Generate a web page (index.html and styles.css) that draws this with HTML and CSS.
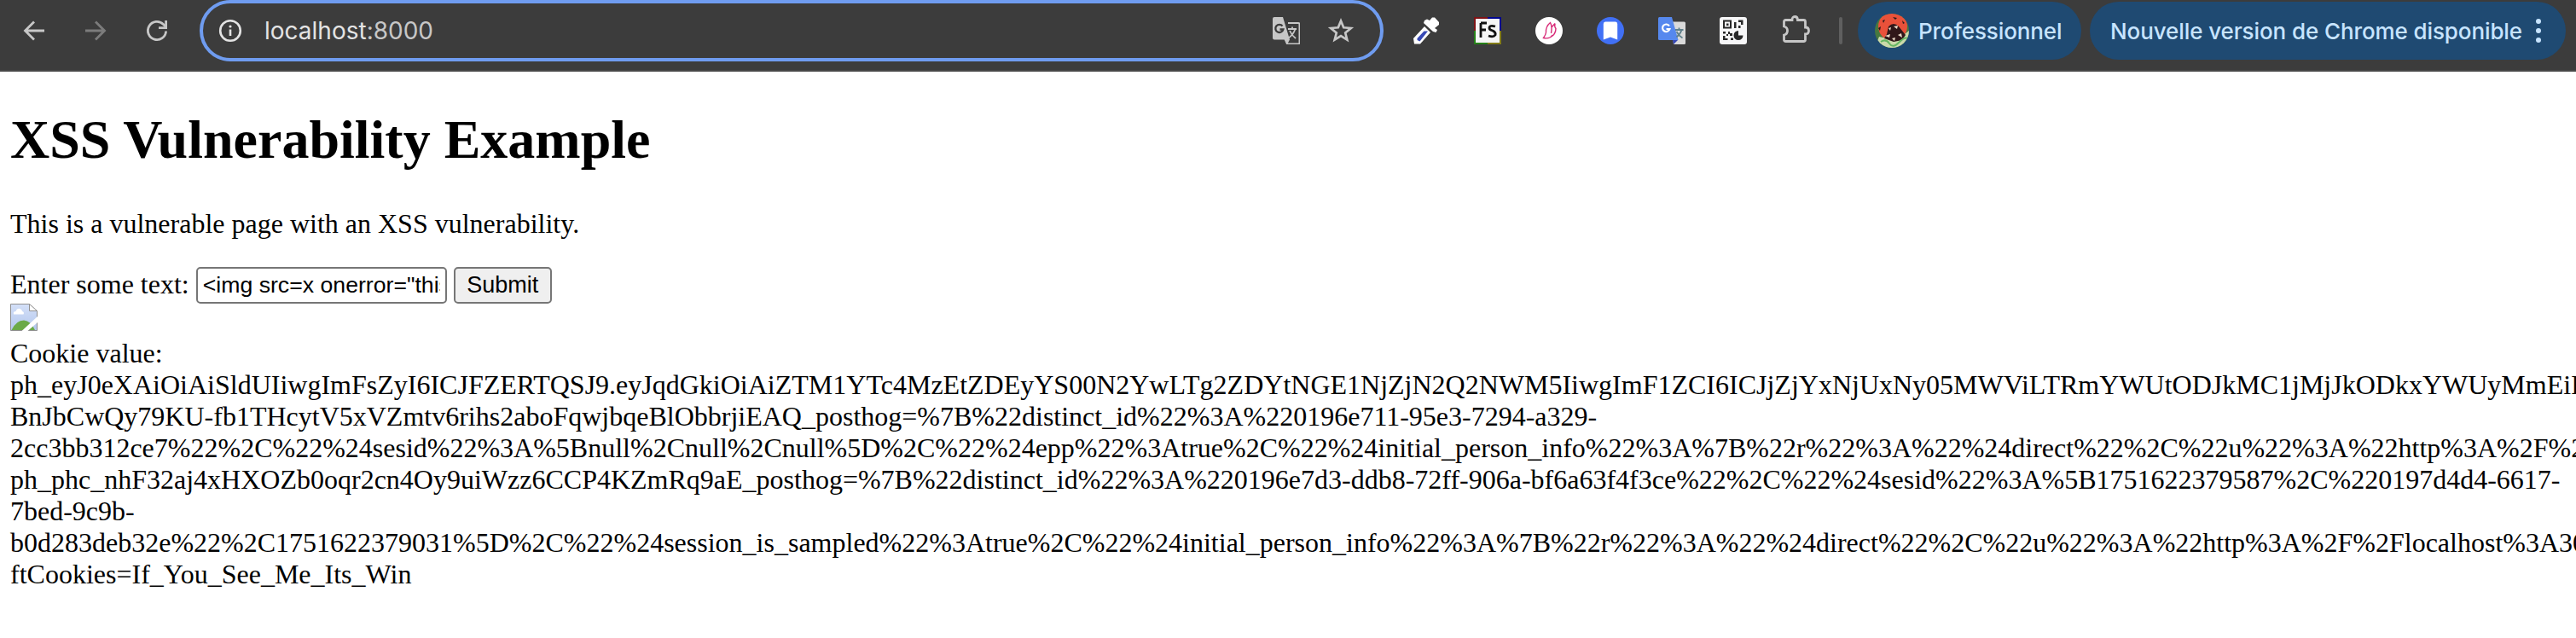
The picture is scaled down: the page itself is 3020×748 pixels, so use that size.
FILE: index.html
```html
<!DOCTYPE html>
<html lang="en">
<head>
<meta charset="utf-8">
<title>XSS Vulnerability Example</title>
<link rel="stylesheet" href="styles.css">
</head>
<body>
<header class="toolbar">
  <nav class="nav">
    <svg class="icon" viewBox="0 0 32 32"><path d="M28 16H6M16 5.500L5.500 16L16 26.500" fill="none" stroke="#c7c7c7" stroke-width="2.800"/></svg>
    <svg class="icon" viewBox="0 0 32 32"><path d="M4 16H26M16 5.500L26.500 16L16 26.500" fill="none" stroke="#7c7c7c" stroke-width="2.800"/></svg>
    <svg class="icon" viewBox="0 0 32 32"><path d="M26.600 16.500A10.600 10.600 0 1 1 23.500 8.500L26 11" fill="none" stroke="#c7c7c7" stroke-width="2.800"/><path d="M28 4V14H18V11.200H25.200V4Z" fill="#c7c7c7"/></svg>
  </nav>
  <div class="omnibox">
    <svg class="info" viewBox="0 0 32 32"><circle cx="16" cy="16" r="11.800" fill="none" stroke="#e3e3e3" stroke-width="2.600"/><path d="M16 14.500V22" stroke="#e3e3e3" stroke-width="2.600"/><circle cx="16" cy="11" r="1.600" fill="#e3e3e3"/></svg>
    <span class="url">localhost<span class="port">:8000</span></span>
    <svg class="icon translate" viewBox="0 0 32 32"><path d="M18 7H30Q31.500 7 31.500 8.500V30Q31.500 31.500 30 31.500H17L13 22" fill="none" stroke="#c7c7c7" stroke-width="2"/><path d="M2 0H12L20 26.500L17 32L14 26.500H2Q0 26.500 0 24.500V2Q0 0 2 0Z" fill="#c7c7c7"/><path d="M18 14H28M23 11.500V14M26.500 14Q24 21 18.500 24.500M20 16Q22.500 21.500 27 25" fill="none" stroke="#c7c7c7" stroke-width="1.800"/><path d="M11.500 10.500A4.600 4.600 0 1 0 12.400 14.500H8.500" fill="none" stroke="#3c3c3c" stroke-width="2.300"/></svg>
    <svg class="icon" viewBox="0 0 32 32"><path d="M16 4.500L19.200 12.300L27.800 13L21.200 18.500L23.300 26.700L16 22.200L8.700 26.700L10.800 18.500L4.200 13L12.800 12.300Z" fill="none" stroke="#c7c7c7" stroke-width="2.700"/></svg>
  </div>
  <div class="extensions">
    <svg class="icon" viewBox="0 0 32 32"><path d="M14 11L21 18L9 31.500H2L1 25Z" fill="#fff"/><path d="M14 4L17 2.500L20 4L23 .5H26L31 6V9L26 13L29 15L27.500 18L24 17L13 7Z" fill="#fff"/><path d="M13.500 16.500H18L8.500 28.500L5.500 27V25Z" fill="#3648b5"/></svg>
    <svg class="icon" viewBox="0 0 32 32"><path d="M0 0H16V16H0Z" fill="#7e1315"/><path d="M16 0H32V16H16Z" fill="#00068f"/><path d="M0 16H16V32H0Z" fill="#258018"/><path d="M16 16H32V32H16Z" fill="#827b17"/><path d="M2 2H30V30H2Z" fill="#f5f5f5"/><path d="M8 7V24M8 7H15M8 15H14M25 11Q18 9 18 13Q18 15 22 16Q26 18 25 21Q23 24 17 22" fill="none" stroke="#111" stroke-width="2.800"/></svg>
    <svg class="icon" viewBox="0 0 32 32"><circle cx="16" cy="16" r="16" fill="#fff"/><path d="M12.500 18Q12 11 17.500 6.500Q20 11 18.500 19M19 12L23 7.500Q22 11 24 13.500Q24 20 18 23.500M12.500 18Q12 21 9.500 24.500Q17 26 20 21" fill="none" stroke="#d82c78" stroke-width="1.400"/></svg>
    <svg class="icon" viewBox="0 0 32 32"><circle cx="16" cy="16" r="16" fill="#4170f5"/><path d="M10 5.500H22Q24.200 5.500 24.200 8V26.500L16 23.500L7.800 26.500V8Q7.800 5.500 10 5.500Z" fill="#fff"/></svg>
    <svg class="icon" viewBox="0 0 32 32"><path d="M15 5.500H30.500Q32 5.500 32 7V30.500Q32 32 30.500 32H18Z" fill="#dadada"/><path d="M17 27H23L18 32Z" fill="#3547b5"/><path d="M1.500 0H16L23.500 27H1.500Q0 27 0 25.500V1.500Q0 0 1.500 0Z" fill="#5688ee"/><path d="M13 10.500A4.300 4.300 0 1 0 13.500 14H9.500" fill="none" stroke="#fff" stroke-width="2.200"/><path d="M20 15H29.500M24.500 12.500V15M27.500 15Q26 20 21.500 23.500M21.500 17Q24 22 28.500 24.500" fill="none" stroke="#60808b" stroke-width="1.800"/></svg>
    <svg class="icon" viewBox="0 0 32 32"><rect width="32" height="32" rx="3" fill="#f7f7f8"/><path d="M5 4.500H13V12.500H5Z" fill="none" stroke="#292929" stroke-width="2"/><path d="M8 7.500H10.500V10H8ZM17 6H19.500V13H17ZM22 3.500H27.500V9H25V6H22ZM22 10H24.500V13H22ZM4 17H7V19.500H4ZM10 17H12V20H10ZM12 19H15V22H12ZM8 20H10V22H8ZM4 22H6.500V25H9.500V27H4ZM13 24.500H16V27H13Z" fill="#292929"/><path d="M22 16A5.500 5.500 0 1 0 27.500 21.500H22Z" fill="#292929"/></svg>
    <svg class="icon puzzle" viewBox="0 0 32 32"><path d="M3.500 5.500H11Q11 1.500 14.200 1.500T17.500 5.500H24.500Q26.500 5.500 26.500 7.500V14Q30.500 14 30.500 18T26.500 22V28.500Q26.500 30.500 24.500 30.500H3.500Q1.500 30.500 1.500 28.500V23Q5.500 22 5.500 18T1.500 13V7.500Q1.500 5.500 3.500 5.500Z" fill="none" stroke="#c7c7c7" stroke-width="2.800"/></svg>
  </div>
  <span class="separator"></span>
  <div class="pill profile">
    <svg class="avatar" viewBox="0 0 40 40"><defs><clipPath id="round"><circle cx="20" cy="20" r="20"/></clipPath></defs><g clip-path="url(#round)"><path d="M0 0H40V40H0Z" fill="#47783f"/><circle cx="21" cy="15" r="17" fill="#e9513a"/><path d="M5 27L14 29L30 28L40 20V40H0Z" fill="#cbd9ab"/><path d="M16 15Q22 9 28 15L36 25L32 31L22 33L11 29L14 24Z" fill="#301719"/><path d="M16 17L19 16L18 20ZM22 15L27 14L26 18ZM12 26L18 24L17 28ZM27 25L31 23L32 28ZM20 29L24 28L23 32Z" fill="#ead9c6"/><path d="M21 4L26 5L24 7ZM9 8L12 7L10 11ZM32 8L35 11L33 12ZM4 17L7 15L6 20Z" fill="#29191a"/><path d="M7 33Q13 29 17 35T28 34T38 29" fill="none" stroke="#66b663" stroke-width="2"/></g></svg>
    <span class="profile-name">Professionnel</span>
  </div>
  <div class="pill update">
    <span class="update-text">Nouvelle version de Chrome disponible</span>
    <svg class="dots" viewBox="0 0 6 28"><circle cx="3" cy="3" r="3"/><circle cx="3" cy="14" r="3"/><circle cx="3" cy="25" r="3"/></svg>
  </div>
</header>
<main class="page">
  <h1 class="title">XSS Vulnerability Example</h1>
  <p class="intro">This is a vulnerable page with an XSS vulnerability.</p>
  <form class="form">
    <label class="label" for="text">Enter some text:</label>
    <input class="field" id="text" type="text" value="&lt;img src=x onerror=&quot;this.src">
    <button class="submit" type="button">Submit</button>
  </form>
  <svg class="broken" viewBox="0 0 32 32"><defs><linearGradient id="sky" x2="0" y2="1"><stop stop-color="#d4e0f8"/><stop offset="1" stop-color="#b3c7ed"/></linearGradient></defs><path d="M.5 .5H22.500L31.500 9V31.500H.5Z" fill="url(#sky)" stroke="#919191"/><path d="M22.500 .5V8.500H31.500Z" fill="#fff" stroke="#919191"/><path d="M4 12.500Q3 9 6.500 9Q8 5 11.500 6Q14 7 14 9Q17 10 15.500 12.500Z" fill="#fff"/><path d="M1.500 31Q7 19.500 16 19.500Q24 20 29 31Z" fill="#6baa47"/><path d="M13.500 32L32 15V22L20.500 32Z" fill="#fff"/></svg>
  <div class="cookies">Cookie value:<br>
ph_eyJ0eXAiOiAiSldUIiwgImFsZyI6ICJFZERTQSJ9.eyJqdGkiOiAiZTM1YTc4MzEtZDEyYS00N2YwLTg2ZDYtNGE1NjZjN2Q2NWM5IiwgImF1ZCI6ICJjZjYxNjUxNy05MWViLTRmYWUtODJkMC1jMjJkODkxYWUyMmEiL<br>
BnJbCwQy79KU-fb1THcytV5xVZmtv6rihs2aboFqwjbqeBlObbrjiEAQ_posthog=%7B%22distinct_id%22%3A%220196e711-95e3-7294-a329-<br>
2cc3bb312ce7%22%2C%22%24sesid%22%3A%5Bnull%2Cnull%2Cnull%5D%2C%22%24epp%22%3Atrue%2C%22%24initial_person_info%22%3A%7B%22r%22%3A%22%24direct%22%2C%22u%22%3A%22http%3A%2F%2<br>
ph_phc_nhF32aj4xHXOZb0oqr2cn4Oy9uiWzz6CCP4KZmRq9aE_posthog=%7B%22distinct_id%22%3A%220196e7d3-ddb8-72ff-906a-bf6a63f4f3ce%22%2C%22%24sesid%22%3A%5B1751622379587%2C%220197d4d4-6617-<br>
7bed-9c9b-<br>
b0d283deb32e%22%2C1751622379031%5D%2C%22%24session_is_sampled%22%3Atrue%2C%22%24initial_person_info%22%3A%7B%22r%22%3A%22%24direct%22%2C%22u%22%3A%22http%3A%2F%2Flocalhost%3A30<br>
ftCookies=If_You_See_Me_Its_Win</div>
</main>
</body>
</html>
```
FILE: styles.css
```css
* { box-sizing: border-box; }
html { overflow: hidden; }
body { margin: 0; width: 3020px; height: 748px; overflow: hidden; background: #fff; color: #000; font-family: "Liberation Serif", "Times New Roman", serif; font-size: 32px; line-height: 37px; }
svg { display: block; flex: none; }
.toolbar { display: flex; align-items: flex-start; height: 84px; background: #3c3c3c; border-bottom: 2px solid #474747; font-family: Inter, sans-serif; }
.nav { display: flex; gap: 40px; width: 234px; padding: 20px 0 0 24px; }
.icon { width: 32px; height: 32px; }
.omnibox { display: flex; align-items: center; width: 1388px; height: 72px; padding: 0 30px 0 16px; border: 4px solid #6f9cf0; border-radius: 36px; }
.info { width: 32px; height: 32px; }
.url { margin-left: 24px; font-size: 28px; color: #e3e3e3; white-space: nowrap; }
.port { color: #c7c7c7; }
.translate { margin-left: auto; margin-right: 32px; }
.extensions { display: flex; gap: 40px; padding: 20px 0 0 34px; }
.puzzle { margin: -2px 0 0 2px; }
.separator { width: 4px; height: 32px; margin: 20px 18px 0 34px; border-radius: 2px; background: #5f5f5f; }
.pill { display: flex; align-items: center; height: 68px; margin-top: 2px; border-radius: 34px; background: #1f4a72; color: #c7e4ff; font-size: 26px; font-weight: 450; letter-spacing: -.1px; white-space: nowrap; }
.profile { width: 262px; padding-left: 20px; }
.avatar { width: 40px; height: 40px; margin-right: 11px; }
.update { width: 558px; margin-left: 10px; padding: 0 29px 0 24px; justify-content: space-between; }
.dots { width: 6px; height: 28px; fill: #c7e4ff; }
.page { padding: 0 0 0 12px; }
.title { margin: 43px 0; font-size: 64px; line-height: 74px; font-weight: bold; }
.intro { margin: 0 0 32px; }
.form { display: flex; align-items: center; height: 43px; margin: 0; }
.label { padding-bottom: 2px; }
.field { width: 294px; height: 43px; margin: 0 8px; padding: 2px 6px; border: 2px solid #767676; border-radius: 5px; background: #fff; color: #000; font: 26.67px "Liberation Sans", Arial, sans-serif; }
.submit { width: 115px; height: 43px; padding: 0; border: 2px solid #767676; border-radius: 5px; background: #efefef; color: #000; font: 27px "Liberation Sans", Arial, sans-serif; }
.broken { width: 32px; height: 32px; }
.cookies { margin-top: 8px; white-space: nowrap; }
```
